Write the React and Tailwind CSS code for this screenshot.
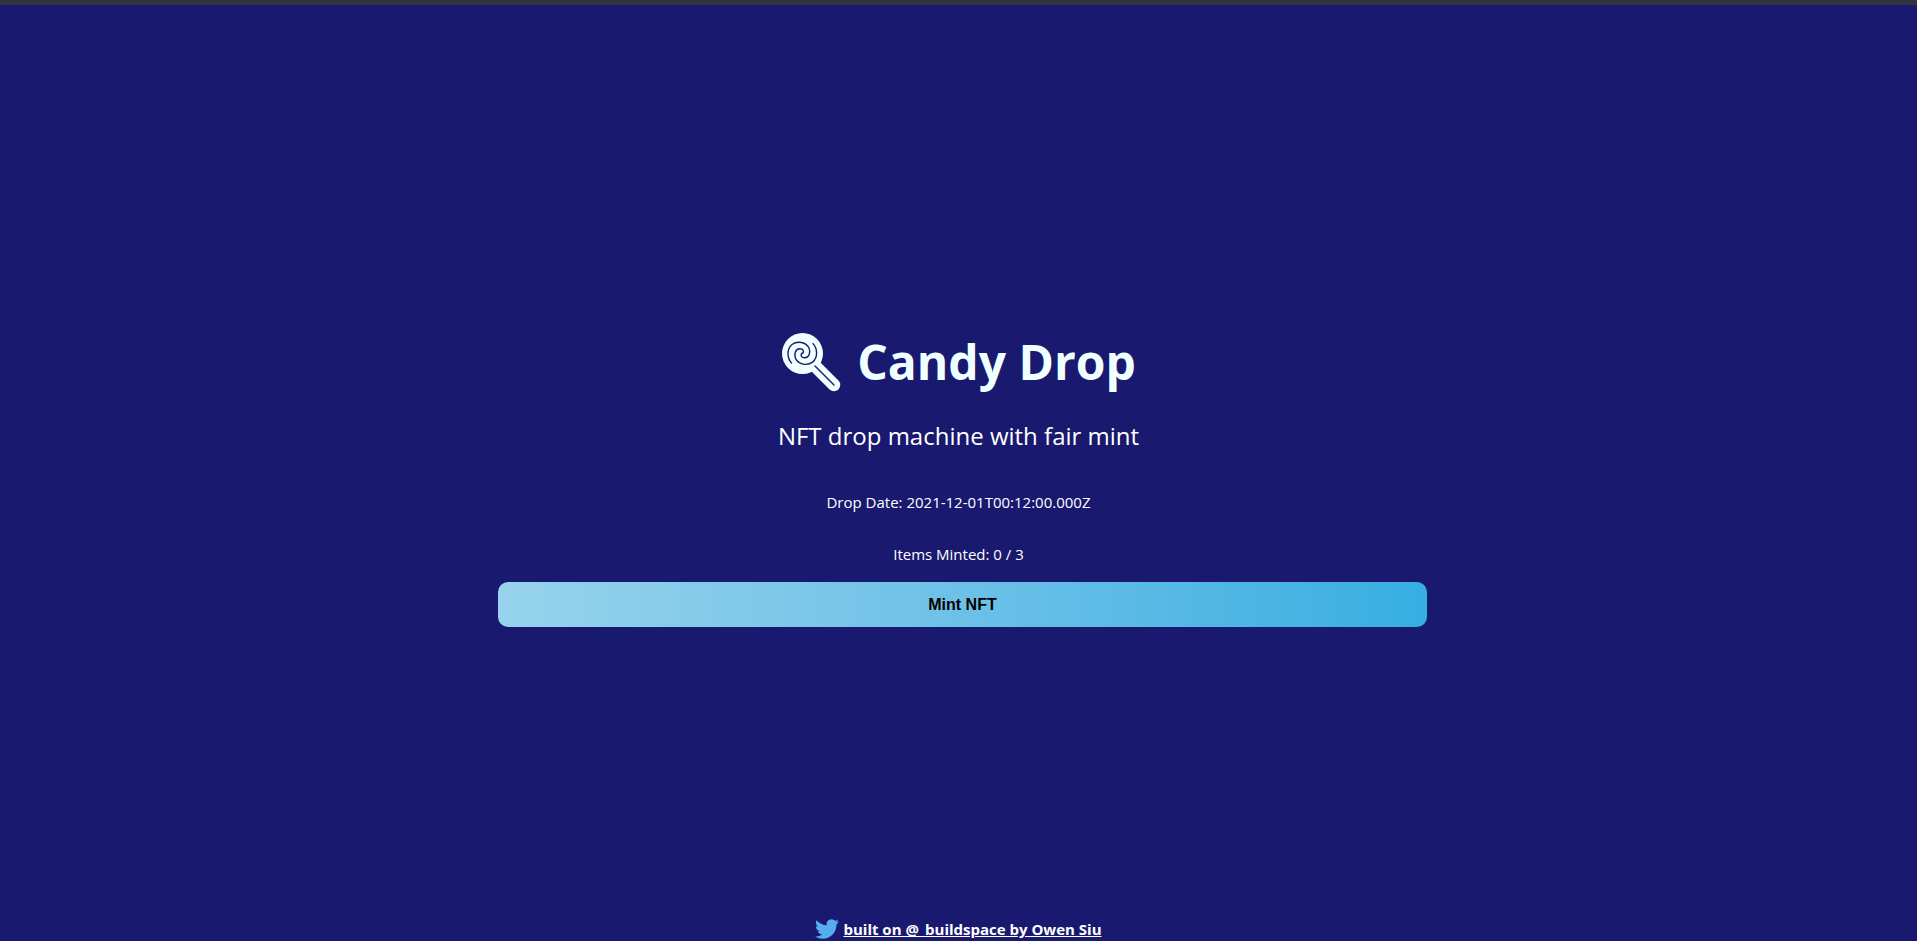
function Lollipop({ className }) {
  return (
    <svg className={className} viewBox="0 0 60 60" fill="none" aria-hidden="true">
      <path d="M31 31 53 53" stroke="#f0ffff" strokeWidth="12.500" strokeLinecap="round" />
      <circle cx="21.500" cy="21.500" r="20.500" fill="#f0ffff" />
      <g stroke="#191970" strokeLinecap="round" strokeWidth="1.400">
        <path d="M34 34 53 53" />
        <path d="M10.500 31C6 26 5.500 17 11 12.500C16.500 8.500 25 10 28 16C30 20.500 28 25.500 24 25.800C20.500 26 19 23 21 21" />
        <path
          transform="rotate(180 21.300 21.300)"
          d="M10.500 31C6 26 5.500 17 11 12.500C16.500 8.500 25 10 28 16C30 20.500 28 25.500 24 25.800C20.500 26 19 23 21 21"
        />
      </g>
    </svg>
  );
}

function TwitterBird({ className }) {
  return (
    <svg className={className} viewBox="0 0 24 24" fill="#55acee" aria-hidden="true">
      <path d="M23.953 4.570a10 10 0 01-2.825.775 4.958 4.958 0 002.163-2.723c-.951.555-2.005.959-3.127 1.184a4.920 4.920 0 00-8.384 4.482C7.690 8.095 4.067 6.130 1.640 3.162a4.822 4.822 0 00-.666 2.475c0 1.710.870 3.213 2.188 4.096a4.904 4.904 0 01-2.228-.616v.060a4.923 4.923 0 003.946 4.827 4.996 4.996 0 01-2.212.085 4.936 4.936 0 004.604 3.417 9.867 9.867 0 01-6.102 2.105c-.390 0-.779-.023-1.170-.067a13.995 13.995 0 007.557 2.209c9.053 0 13.998-7.496 13.998-13.985 0-.210 0-.420-.015-.630A9.935 9.935 0 0024 4.590z" />
    </svg>
  );
}

export default function App() {
  return (
    <div className="flex min-h-screen flex-col border-t-5 border-[#32353f] bg-[#191970] text-center font-['Open_Sans','Noto_Sans',sans-serif] text-white">
      <main className="flex flex-1 flex-col items-center pt-[321px]">
        <h1 className="flex items-center gap-4 text-[48px] leading-[72px] font-bold text-[#f0ffff]">
          <Lollipop className="size-[60px]" />
          Candy Drop
        </h1>
        <p className="mt-5 text-2xl leading-9">NFT drop machine with fair mint</p>
        <p className="mt-9 text-[15px] leading-6">Drop Date: 2021-12-01T00:12:00.000Z</p>
        <p className="mt-7 text-[15px] leading-6">Items Minted: 0 / 3</p>
        <button
          type="button"
          className="mt-4 ml-2 h-[45px] w-[48.5%] rounded-[10px] bg-linear-to-r from-[#97d3ec] to-[#35aee2] font-['Liberation_Sans',sans-serif] text-base font-bold text-black"
        >
          Mint NFT
        </button>
      </main>
      <footer className="flex items-center justify-center gap-1">
        <TwitterBird className="size-6" />
        <a href="#" className="text-[15px] leading-6 font-bold underline">
          built on @_buildspace by Owen Siu
        </a>
      </footer>
    </div>
  );
}
